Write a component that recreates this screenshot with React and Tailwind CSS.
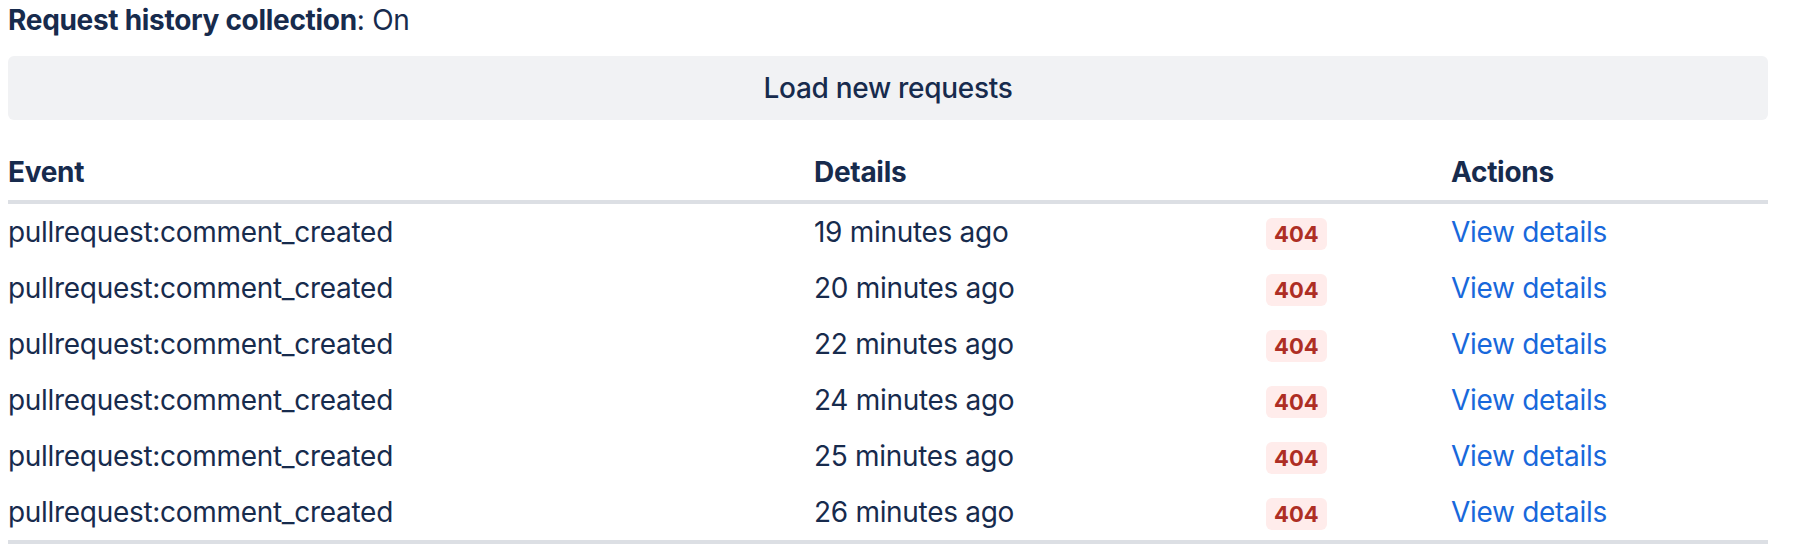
import React from 'react';

const rows = [
  { event: 'pullrequest:comment_created', when: '19 minutes ago', status: '404' },
  { event: 'pullrequest:comment_created', when: '20 minutes ago', status: '404' },
  { event: 'pullrequest:comment_created', when: '22 minutes ago', status: '404' },
  { event: 'pullrequest:comment_created', when: '24 minutes ago', status: '404' },
  { event: 'pullrequest:comment_created', when: '25 minutes ago', status: '404' },
  { event: 'pullrequest:comment_created', when: '26 minutes ago', status: '404' },
];

const cols = 'grid grid-cols-[806px_452px_185px_1fr] items-center';

export default function App() {
  return (
    <div className="min-h-screen bg-white text-[#172b4d] font-['Inter',sans-serif] tracking-[-0.3px] px-2">
      <p className="h-10 flex items-center text-[28px] leading-10">
        <span className="font-bold">Request history collection</span>: On
      </p>
      <div className="w-[1760px] mt-4">
        <button
          type="button"
          className="w-full h-16 bg-[#f1f2f4] rounded-md text-[28px] font-medium text-[#172b4d] tracking-[-0.3px]"
        >
          Load new requests
        </button>

        <div className="mt-6">
          <div className={`${cols} h-[60px] border-b-4 border-[#dcdfe4] text-[28px] font-bold`}>
            <div>Event</div>
            <div>Details</div>
            <div />
            <div>Actions</div>
          </div>
          <div className="border-b-4 border-[#dcdfe4]">
            {rows.map((r, i) => (
              <div key={i} className={`${cols} h-14 text-[28px]`}>
                <div>{r.event}</div>
                <div>{r.when}</div>
                <div>
                  <span className="inline-flex items-center h-8 px-2 rounded-md bg-[#ffeceb] text-[#ae2e24] text-[22px] font-bold leading-none tracking-normal">
                    {r.status}
                  </span>
                </div>
                <div>
                  <a href="#" className="text-[#1868db]">View details</a>
                </div>
              </div>
            ))}
          </div>
        </div>
      </div>
    </div>
  );
}
